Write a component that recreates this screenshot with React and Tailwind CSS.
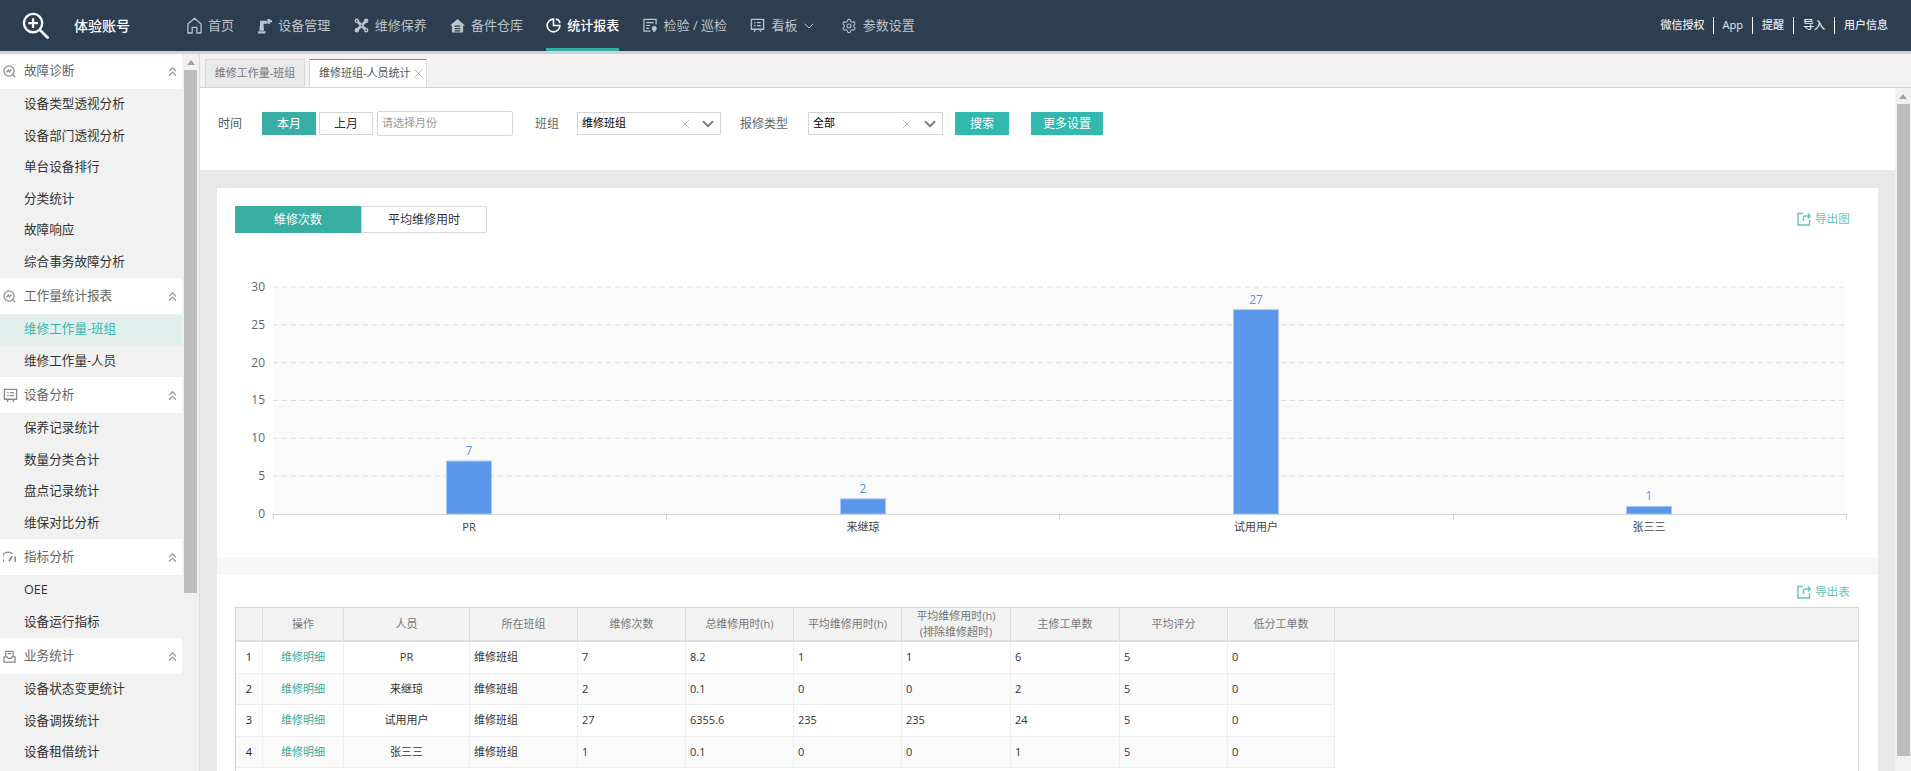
import { ChevronDown, ChevronsUp, Settings, X } from 'lucide-react';

const navItems = [
  { label: '首页', icon: HomeIcon },
  { label: '设备管理', icon: RobotIcon },
  { label: '维修保养', icon: ToolsIcon },
  { label: '备件仓库', icon: StoreIcon },
  { label: '统计报表', icon: PieIcon, active: true },
  { label: '检验 / 巡检', icon: CheckIcon },
  { label: '看板', icon: BoardIcon, arrow: true },
  { label: '参数设置', icon: GearIcon },
];

const menu = [
  { title: '故障诊断', icon: PulseIcon, first: true, items: ['设备类型透视分析', '设备部门透视分析', '单台设备排行', '分类统计', '故障响应', '综合事务故障分析'] },
  { title: '工作量统计报表', icon: PulseIcon, items: ['维修工作量-班组', '维修工作量-人员'] },
  { title: '设备分析', icon: BoardIcon, items: ['保养记录统计', '数量分类合计', '盘点记录统计', '维保对比分析'] },
  { title: '指标分析', icon: GaugeIcon, items: ['OEE', '设备运行指标'] },
  { title: '业务统计', icon: TrayIcon, items: ['设备状态变更统计', '设备调拨统计', '设备租借统计'] },
];

const columns = ['', '操作', '人员', '所在班组', '维修次数', '总维修用时(h)', '平均维修用时(h)', '平均维修用时(h)', '主修工单数', '平均评分', '低分工单数', ''];
const colWidths = ['w-[27px]', 'w-[81px]', 'w-[126px]', 'w-[108px]', 'w-[108px]', 'w-[108px]', 'w-[108px]', 'w-[109px]', 'w-[109px]', 'w-[108px]', 'w-[107px]', ''];

const rows = [
  ['1', 'PR', '维修班组', '7', '8.2', '1', '1', '6', '5', '0'],
  ['2', '来继琼', '维修班组', '2', '0.1', '0', '0', '2', '5', '0'],
  ['3', '试用用户', '维修班组', '27', '6355.6', '235', '235', '24', '5', '0'],
  ['4', '张三三', '维修班组', '1', '0.1', '0', '0', '1', '5', '0'],
];

const bars = [
  { name: 'PR', value: 7, x: 252 },
  { name: '来继琼', value: 2, x: 646 },
  { name: '试用用户', value: 27, x: 1039 },
  { name: '张三三', value: 1, x: 1432 },
];

function HomeIcon() {
  return (
    <svg viewBox="0 0 16 18" className="w-[15px] h-[17px] fill-none stroke-current" strokeWidth="1.4">
      <path d="M1 7.5 8 1.2l7 6.3V17h-4.5v-6h-5v6H1z" strokeLinejoin="round" />
    </svg>
  );
}

function RobotIcon() {
  return (
    <svg viewBox="0 0 16 18" className="w-[15px] h-[17px] fill-current">
      <path d="M1 15h8v2.5H1zM3 9h4l.6 5.5H2.5zM3.2 4h7.3v3H7v2H3.2z" />
      <path d="M11 2h3v1.4h2v2h-2V7h-3z" />
    </svg>
  );
}

function ToolsIcon() {
  return (
    <svg viewBox="0 0 16 16" className="w-[15px] h-[15px] fill-current stroke-current" strokeWidth="3">
      <path d="M3.5 3.5l9 9M12.5 3.5l-9 9" fill="none" />
      <circle cx="3" cy="3" r="1.4" strokeWidth="2" />
      <circle cx="13" cy="3" r="1.4" strokeWidth="2" />
      <circle cx="3" cy="13" r="1.4" strokeWidth="2" />
      <circle cx="13" cy="13" r="1.4" strokeWidth="2" />
      <circle cx="3" cy="3" r="0.9" fill="#2d3e50" stroke="none" />
      <circle cx="13" cy="13" r="0.9" fill="#2d3e50" stroke="none" />
      <circle cx="8" cy="8" r="0.8" fill="#2d3e50" stroke="none" />
    </svg>
  );
}

function StoreIcon() {
  return (
    <svg viewBox="0 0 16 16" className="w-[15px] h-[15px] fill-current">
      <path d="M8 1 16 8h-2v7.5H2V8H0zM5 8v1.4h6V8zm0 2.6V12h6v-1.4zm0 2.5v1.2h6v-1.2z" fillRule="evenodd" />
    </svg>
  );
}

function PieIcon() {
  return (
    <svg viewBox="0 0 16 16" className="w-[15px] h-[15px] fill-none stroke-current" strokeWidth="1.7">
      <path d="M8 1.2a6.8 6.8 0 1 0 6.8 6.8H8z" />
      <path d="M10.5 1.2a5 5 0 0 1 4.3 4.3" />
    </svg>
  );
}

function CheckIcon() {
  return (
    <svg viewBox="0 0 16 16" className="w-[15px] h-[15px] fill-none stroke-current" strokeWidth="1.3">
      <path d="M8 14H1V1.5h13V7" />
      <path d="M3.5 5h8M3.5 8h4M3.5 11h3" />
      <path d="M12 8.5a2.6 2.6 0 0 1 2.6 2.6c0 1.7-2.6 4.2-2.6 4.2s-2.6-2.5-2.6-4.2A2.6 2.6 0 0 1 12 8.5z" fill="currentColor" stroke="none" />
    </svg>
  );
}

function BoardIcon() {
  return (
    <svg viewBox="0 0 16 16" className="w-[15px] h-[15px] fill-none stroke-current" strokeWidth="1.4">
      <path d="M1.5 1.5h13v10.5h-13z" />
      <path d="M4.5 5h1.5M7.5 5h4M4.5 8.2h1.5M7.5 8.2h4M5.5 12l-1 3M10.5 12l1 3" />
    </svg>
  );
}

function GearIcon() {
  return <Settings className="w-[16px] h-[16px]" strokeWidth={1.6} />;
}

function PulseIcon() {
  return (
    <svg viewBox="0 0 14 14" className="w-[13px] h-[13px] fill-none stroke-current" strokeWidth="1.3">
      <circle cx="6.5" cy="6.5" r="5.5" />
      <path d="M3.8 7.8 6 5.5 7 7.5 9.2 4.8M10.5 10.5l2.5 2.5" />
    </svg>
  );
}

function GaugeIcon() {
  return (
    <svg viewBox="0 0 14 14" className="w-[13px] h-[13px] fill-none stroke-current" strokeWidth="1.4">
      <path d="M1.2 11.5A6 6 0 0 1 10 3" />
      <path d="M12.5 6a6 6 0 0 1 .3 5.5M6.5 11 10 5.5" strokeWidth="1.8" />
    </svg>
  );
}

function TrayIcon() {
  return (
    <svg viewBox="0 0 14 14" className="w-[13px] h-[13px] fill-none stroke-current" strokeWidth="1.3">
      <path d="M3 7V1.5h8V7M1 7.5h3.5l1 1.5h3l1-1.5H13V13H1zM5 4h4" />
    </svg>
  );
}

function ExportIcon() {
  return (
    <svg viewBox="0 0 14 14" className="w-[14px] h-[14px] fill-none stroke-current" strokeWidth="1.4">
      <path d="M6 1.5H1v11.5h11.5V8" />
      <path d="M6.5 9V5.5a1.5 1.5 0 0 1 1.5-1.5h5M10.8 1.5 13.2 4l-2.4 2.5" />
    </svg>
  );
}

function ExportLink({ text }) {
  return (
    <div className="flex items-center gap-[4px] text-[11.7px] text-[#62c4bb]">
      <ExportIcon />
      <span>{text}</span>
    </div>
  );
}

function SelectBox({ value, width }) {
  return (
    <div className={`${width} h-[23px] border border-[#d5d5d5] bg-white flex items-center pl-[4px] pr-[3px] text-[11px] text-black`}>
      <span className="flex-1">{value}</span>
      <X className="w-[16px] h-[16px] text-[#bdbdbd]" strokeWidth={1.4} />
      <ChevronDown className="w-[18px] h-[18px] ml-[6px] text-[#808080]" strokeWidth={2.6} />
    </div>
  );
}

function Header() {
  return (
    <header className="h-[51px] shrink-0 bg-[#2d3e50] flex items-stretch">
      <div className="w-[187px] shrink-0 flex items-center pl-[22px]">
        <svg viewBox="0 0 28 28" className="w-[27px] h-[27px] fill-none stroke-white" strokeWidth="2.4">
          <circle cx="11.5" cy="11.5" r="9.5" />
          <path d="M11.5 6.5v10M6.5 11.5h10" />
          <path d="M18.5 18.5 26.5 26.5" strokeLinecap="round" strokeWidth="2.8" />
        </svg>
        <span className="ml-[25px] text-sm font-medium text-white">体验账号</span>
      </div>
      <nav className="flex items-stretch gap-[23.3px]">
        {navItems.map((item) => {
          const Icon = item.icon;
          return (
            <div
              key={item.label}
              className={`flex items-center gap-[6px] text-[13px] border-y-[3px] border-t-transparent ${item.active ? 'border-b-[#35aea5] text-white font-medium' : 'border-b-transparent text-[#bcc3ca]'}`}
            >
              <Icon />
              <span>{item.label}</span>
              {item.arrow && <ChevronDown className="w-[16px] h-[16px] -ml-[2px]" strokeWidth={1.5} />}
            </div>
          );
        })}
      </nav>
      <div className="ml-auto mr-[23px] flex items-center text-[11px] font-medium text-[#e6e9ec]">
        <span className="pr-[8px]">微信授权</span>
        <span className="px-[9px] border-l border-white">App</span>
        <span className="px-[9px] border-l border-white">提醒</span>
        <span className="px-[9px] border-l border-white">导入</span>
        <span className="pl-[9px] border-l border-white">用户信息</span>
      </div>
    </header>
  );
}

function Sidebar() {
  return (
    <aside className="w-[200px] shrink-0 flex bg-[#f1f1f1] border-r border-[#dcdcdc] overflow-hidden">
      <div className="w-[182px] shrink-0">
        {menu.map((group) => {
          const Icon = group.icon;
          return (
            <div key={group.title}>
              <div className={`${group.first ? 'h-[35px]' : 'h-[36px]'} bg-white flex items-center pl-[3px] pr-[2px] text-[12.6px] text-[#666]`}>
                <span className="w-[13px] text-[#888]"><Icon /></span>
                <span className="ml-[8px] flex-1">{group.title}</span>
                <ChevronsUp className="w-[15px] h-[15px] text-[#999]" strokeWidth={2} />
              </div>
              {group.items.map((name) => (
                <div
                  key={name}
                  className={`h-[31.5px] flex items-center pl-[24px] text-[12.6px] ${name === '维修工作量-班组' ? 'bg-[#e1efed] text-[#3ab5ab]' : 'text-[#333]'}`}
                >
                  {name}
                </div>
              ))}
            </div>
          );
        })}
      </div>
      <div className="flex-1 flex flex-col items-center pt-[6px]">
        <div className="w-0 h-0 border-x-[4px] border-x-transparent border-b-[5px] border-b-[#a3a3a3]" />
        <div className="w-[13px] h-[523px] mt-[5px] bg-[#bdbdbd]" />
      </div>
    </aside>
  );
}

function Chart() {
  return (
    <svg viewBox="0 0 1661 300" className="block w-[1661px] h-[300px]">
      <rect x="56" y="47" width="1572" height="227" fill="#fafafa" />
      {[0, 1, 2, 3, 4, 5].map((i) => {
        const y = 47 + i * 37.83;
        return <line key={i} x1="56" x2="1628" y1={y} y2={y} stroke="#dcdcdc" strokeDasharray="5 4" />;
      })}
      {[0, 5, 10, 15, 20, 25, 30].map((v) => (
        <text key={v} x="48" y={274 - v * 7.567 + 4} textAnchor="end" fontSize="12" fill="#666">{v}</text>
      ))}
      <path d="M56 274.5H1629.5M56.5 274.5v5M449.5 274.5v5M842.5 274.5v5M1236.5 274.5v5M1629.5 274.5v5" fill="none" stroke="#d4d4d4" />
      {bars.map((b) => {
        const h = b.value * 7.567;
        return (
          <g key={b.name}>
            <rect x={b.x - 22.5} y={274 - h} width="45" height={h} fill="#5a96ea" stroke="#a9c8f3" />
            <text x={b.x} y={274 - h - 6} textAnchor="middle" fontSize="12" fill="#5a96ea">{b.value}</text>
            <text x={b.x} y="291" textAnchor="middle" fontSize="11" fill="#444">{b.name}</text>
          </g>
        );
      })}
    </svg>
  );
}

function DataTable() {
  return (
    <div className="border border-[#d4d4d4] h-[200px]">
      <table className="w-full table-fixed border-separate border-spacing-0 text-[11px]">
        <colgroup>
          {colWidths.map((w, i) => <col key={i} className={w} />)}
        </colgroup>
        <thead>
          <tr>
            {columns.map((c, i) => (
              <th key={i} className="h-[34px] bg-[#f2f2f2] border-r border-b-2 border-[#dedede] last:border-r-0 font-normal text-[#777] leading-[16px]">
                {i === 7 ? <>{c}<br />(排除维修超时)</> : c}
              </th>
            ))}
          </tr>
        </thead>
        <tbody>
          {rows.map((r, idx) => {
            const cellBg = idx % 2 === 1 ? 'bg-[#fafafa]' : 'bg-white';
            const cell = `h-[31.5px] border-r border-b border-[#eeeeee] ${cellBg}`;
            return (
              <tr key={r[0]}>
                <td className={`${cell} text-center text-[#222]`}>{r[0]}</td>
                <td className={`${cell} text-center text-[#3aa99f]`}>维修明细</td>
                <td className={`${cell} text-center text-[#333]`}>{r[1]}</td>
                {r.slice(2).map((v, i) => (
                  <td key={i} className={`${cell} pl-[4px] text-[#333]`}>{v}</td>
                ))}
              </tr>
            );
          })}
        </tbody>
      </table>
    </div>
  );
}

function App() {
  return (
    <div className="h-screen w-full overflow-hidden flex flex-col font-['Open_Sans','Noto_Sans_CJK_SC',sans-serif]">
      <Header />
      <div className="h-[3px] shrink-0 bg-[#d0d1d3]" />
      <div className="flex-1 min-h-0 flex">
        <Sidebar />
        <main className="flex-1 min-w-0 flex flex-col">
          <div className="h-[34px] shrink-0 bg-[#f2f2f2] border-b border-[#d5d5d5] flex items-end pl-[5px] gap-[4px] text-[11px]">
            <div className="w-[100px] h-[28px] bg-[#e9e9e9] border border-b-0 border-[#d8d8d8] flex items-center justify-center text-[#777]">维修工作量-班组</div>
            <div className="w-[118px] h-[28px] bg-white border-x border-[#d8d8d8] border-t border-t-[#35aea5] flex items-center pl-[9px] text-[#555]">
              <span>维修班组-人员统计</span>
              <X className="w-[15px] h-[15px] text-[#b5b5b5]" strokeWidth={1.5} />
            </div>
          </div>
          <div className="flex-1 min-h-0 flex">
            <div className="flex-1 min-w-0 bg-[#e8e8e8] overflow-hidden">
              <div className="h-[82px] bg-white flex items-start pt-[24px] pl-[18px] text-xs">
                <div className="h-[23px] flex items-center">
                  <span className="text-[#555]">时间</span>
                  <button className="ml-[20px] w-[54px] h-[23px] bg-[#38aea5] text-white">本月</button>
                  <button className="ml-[3px] w-[54px] h-[23px] border border-[#d5d5d5] text-[#333]">上月</button>
                  <div className="ml-[4px] w-[136px] h-[25px] border border-[#d5d5d5] rounded-[2px] flex items-center pl-[4px] text-[11px] text-[#999]">请选择月份</div>
                  <span className="ml-[22px] text-[#666]">班组</span>
                  <div className="ml-[18px]"><SelectBox value="维修班组" width="w-[144px]" /></div>
                  <span className="ml-[19px] text-[#666]">报修类型</span>
                  <div className="ml-[20px]"><SelectBox value="全部" width="w-[135px]" /></div>
                  <button className="ml-[12px] w-[54px] h-[23px] bg-[#32b8ad] text-white">搜索</button>
                  <button className="ml-[22px] w-[72px] h-[23px] bg-[#32b8ad] text-white">更多设置</button>
                </div>
              </div>
              <div className="px-[17px] pt-[18px]">
                <section className="h-[369px] bg-white">
                  <div className="h-[52px] pt-[18px] pl-[18px] pr-[28px] flex justify-between items-start">
                    <div className="flex text-xs">
                      <div className="w-[126px] h-[27px] bg-[#38aea5] text-white flex items-center justify-center">维修次数</div>
                      <div className="w-[126px] h-[27px] border border-[#d8d8d8] text-[#333] flex items-center justify-center">平均维修用时</div>
                    </div>
                    <div className="mt-[4px]"><ExportLink text="导出图" /></div>
                  </div>
                  <Chart />
                </section>
                <div className="h-[18px] bg-[#f7f7f7]" />
                <section className="bg-white pl-[18px] pr-[19px] h-[200px]">
                  <div className="h-[32px] pt-[2px] flex items-center justify-end pr-[9px]">
                    <ExportLink text="导出表" />
                  </div>
                  <DataTable />
                </section>
              </div>
            </div>
            <div className="w-[16px] shrink-0 bg-[#f1f1f1] flex flex-col items-center pt-[6px]">
              <div className="w-0 h-0 border-x-[4px] border-x-transparent border-b-[5px] border-b-[#a3a3a3]" />
              <div className="w-[13px] h-[652px] mt-[5px] bg-[#bdbdbd]" />
            </div>
          </div>
        </main>
      </div>
    </div>
  );
}

export default App;
